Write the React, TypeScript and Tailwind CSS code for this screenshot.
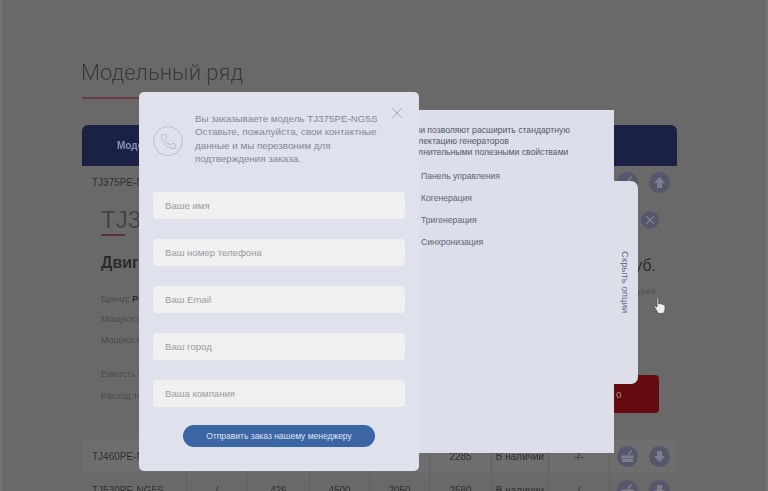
import { Phone, X } from "lucide-react";

const fields = ["Ваше имя", "Ваш номер телефона", "Ваш Email", "Ваш город", "Ваша компания"];
const options = ["Панель управления", "Когенерация", "Тригенерация", "Синхронизация"];

function ArrowBtn({ up }: { up?: boolean }) {
  return (
    <span className="flex h-[21px] w-[21px] items-center justify-center rounded-full bg-[#56566c]">
      <svg width="13" height="13" viewBox="0 0 13 13" className={up ? "" : "rotate-180"}>
        <path d="M6.5 1 L12 7 H9 V12 H4 V7 H1 Z" fill="#7e7e8c" />
      </svg>
    </span>
  );
}

function BasketBtn() {
  return (
    <span className="flex h-[21px] w-[21px] items-center justify-center rounded-full bg-[#56566c]">
      <svg width="15" height="13" viewBox="0 0 15 13">
        <path d="M1 5.5 H14 L12.5 12 H2.5 Z" fill="#7e7e8c" />
        <path d="M1 8.5 H14" stroke="#56566c" strokeWidth="0.7" />
        <path d="M8 5 L11.5 0.5" stroke="#7e7e8c" strokeWidth="1.4" fill="none" />
      </svg>
    </span>
  );
}

function Row({ cells, band }: { cells: string[]; band?: boolean }) {
  return (
    <div className={`grid h-[34px] grid-cols-[105px_61px_62px_60px_60px_62px_57px_61px_67px] items-center text-[10px] text-[#2f2f2f] ${band ? "bg-[#6e6e6e]" : ""}`}>
      {cells.map((c, i) => (
        <span key={i} className={`flex h-full items-center border-r border-[#636363] ${i === 0 ? "pl-[10px]" : "justify-center"}`}>
          {c}
        </span>
      ))}
      <span className="flex items-center justify-center gap-[11px]">
        <BasketBtn />
        <ArrowBtn />
      </span>
    </div>
  );
}

export default function App() {
  return (
    <div className="h-[491px] w-[768px] overflow-hidden bg-[#696969]">
      <div className="relative h-[491px] w-[768px] border-x-2 border-x-[#727272] font-['Liberation_Sans',sans-serif] blur-[0.4px]">
        {/* страница под оверлеем */}
        <div className="ml-[79px] w-[596px] pt-[59px]">
          <h1 className="font-['Roboto',sans-serif] text-[22px] leading-[28px] font-light text-[#3a3a3a]">Модельный ряд</h1>
          <div className="mt-[10px] ml-[1px] h-[2px] w-[60px] bg-[#6e3b45]" />
          <div className="mt-[26px] ml-[1px] flex h-[41px] items-center rounded-t-[6px] bg-[#1b2144] pl-[35px] text-[10px] font-bold text-[#8d93b0]">
            Модель
          </div>
          <div className="ml-[1px] flex h-[33px] items-center justify-between pr-[7px] pl-[10px] text-[10px] text-[#2f2f2f]">
            <span>TJ375PE-NG5S</span>
            <span className="flex items-center gap-[11px]">
              <BasketBtn />
              <ArrowBtn up />
            </span>
          </div>
          <div className="ml-[1px] flex h-[240px] justify-between pr-[18px] pl-[19px]">
            <div>
              <div className="mt-[7px] text-[24px] leading-[28px] font-light text-[#454545]">TJ375PE</div>
              <div className="h-[2px] w-[24px] bg-[#5c2f3a]" />
              <div className="mt-[17px] text-[16px] leading-[20px] font-bold text-[#2b2b2b]">Двигатель</div>
              <div className="mt-[20px] text-[9px] leading-[12px] text-[#4a4a4a]">
                Бренд: <b className="text-[#2b2b2b]">Perkins</b>
              </div>
              <div className="mt-[8px] text-[9px] leading-[12px] text-[#4a4a4a]">Мощность</div>
              <div className="mt-[9px] text-[9px] leading-[12px] text-[#4a4a4a]">Мощность</div>
              <div className="mt-[22px] text-[9px] leading-[12px] text-[#4a4a4a]">Емкость бака</div>
              <div className="mt-[10px] text-[9px] leading-[12px] text-[#4a4a4a]">Расход топлива</div>
            </div>
            <div className="flex flex-col items-end">
              <span className="mt-[12px] flex h-[18px] w-[18px] items-center justify-center rounded-full bg-[#56566c]">
                <X size={14} strokeWidth={2} className="text-[#7e7e8c]" />
              </span>
              <div className="mt-[27px] pr-[3px] text-[16px] leading-[20px] text-[#2b2b2b]">руб.</div>
              <div className="mt-[11px] pr-[3px] text-[8px] leading-[10px] text-[#4e4e4e]">дней</div>
              <div className="mt-[78px] flex h-[38px] w-[120px] items-center rounded-[4px] bg-[#660a12] pl-[77px] text-[10px] text-[#a98a8e]">
                о
              </div>
            </div>
          </div>
          <div className="ml-[1px]">
            <Row band cells={["TJ460PE-NG5S", "/", "460", "4500", "2050", "2285", "В наличии", "-/-"]} />
            <Row cells={["TJ530PE-NG5S", "/", "426", "4500", "2050", "2580", "В наличии", "-/-"]} />
          </div>
        </div>

        {/* курсор */}
        <svg width="12" height="17" viewBox="0 0 12 17" className="absolute top-[297px] left-[652px]">
          <path
            d="M3 1.2 C3 .4 4.6 .4 4.6 1.2 V7 L5.5 6.6 C6.5 6.4 7 6.8 7.2 7.2 C8 6.9 8.8 7.2 9 7.8 C9.8 7.6 11 8 11 9.2 V12 C11 14 10 15.8 9 16.4 H4.6 C3.4 15.2 2.2 13 .8 10.6 C.2 9.6 1.4 8.6 2.2 9.4 L3 10.2 Z"
            fill="#eeeeee"
            stroke="#3c3c3c"
            strokeWidth="0.6"
          />
        </svg>

        {/* панель опций */}
        <div className="absolute top-[181px] left-[500px] flex h-[203px] w-[136px] items-center justify-end rounded-r-[7px] bg-[#dcdfea] pr-[6px]">
          <span className="[writing-mode:vertical-rl] text-[9.6px] text-[#666a7b]">Скрыть опции</span>
        </div>
        <div className="absolute top-[110px] left-[378px] h-[343px] w-[234px] bg-[#dcdfea] pt-[15px] pl-[19px]">
          <p className="text-[8.65px] leading-[11px] whitespace-nowrap text-[#55586a]">
            Опции позволяют расширить стандартную
            <br />
            комплектацию генераторов
            <br />
            дополнительными полезными свойствами
          </p>
          <ul className="mt-[12px] ml-[22px] flex flex-col gap-[10px] text-[8.6px] leading-[12px] text-[#5f6274]">
            {options.map((o) => (
              <li key={o}>{o}</li>
            ))}
          </ul>
        </div>

        {/* окно заказа */}
        <div className="absolute top-[92px] left-[137px] h-[379px] w-[280px] rounded-[5px] bg-[#dfe1ec] px-[14px] pt-[20px]">
          <button className="absolute top-[12px] right-[13px] text-[#9a9dab]">
            <X size={18} strokeWidth={1.1} />
          </button>
          <div className="flex h-[80px] items-start gap-[12px]">
            <span className="mt-[14px] flex h-[30px] w-[30px] shrink-0 items-center justify-center rounded-full border border-[#bcbfcc]">
              <Phone size={17} strokeWidth={0.9} className="text-[#a3a6b4]" />
            </span>
            <p className="text-[9.8px] leading-[13.4px] text-[#85889a]">
              Вы заказываете модель TJ375PE-NG5S
              <br />
              Оставьте, пожалуйста, свои контактные
              <br />
              данные и мы перезвоним для
              <br />
              подтверждения заказа.
            </p>
          </div>
          <div className="flex flex-col gap-[20px]">
            {fields.map((f) => (
              <div key={f} className="flex h-[27px] items-center rounded-[4px] bg-[#eff0ef] pt-[2px] pl-[12px] text-[9.6px] text-[#9a9ca3]">
                {f}
              </div>
            ))}
          </div>
          <div className="mt-[18px] flex justify-center">
            <button className="h-[22px] w-[192px] rounded-full bg-[#3b65a4] text-[8.5px] text-[#dfe6f2]">
              Отправить заказ нашему менеджеру
            </button>
          </div>
        </div>
      </div>
    </div>
  );
}
